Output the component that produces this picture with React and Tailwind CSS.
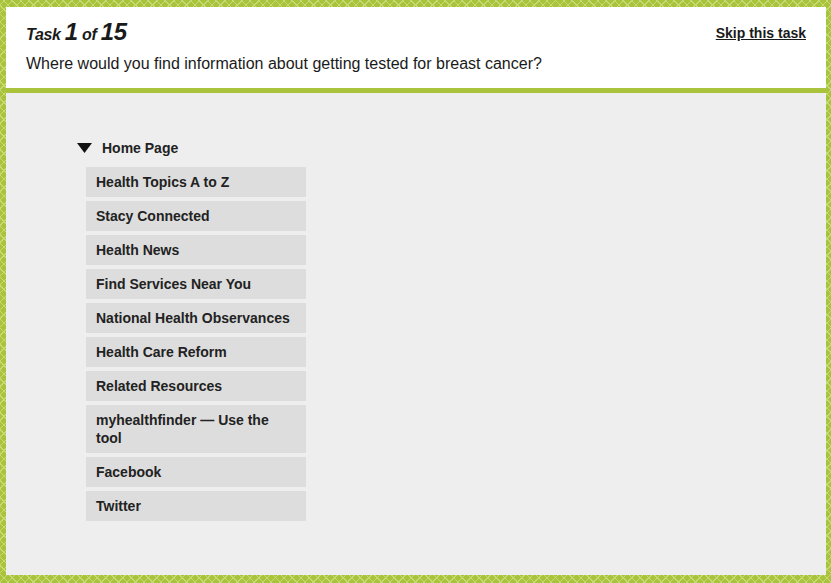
// Tree test task — header + arbre de navigation
const items = [
  'Health Topics A to Z',
  'Stacy Connected',
  'Health News',
  'Find Services Near You',
  'National Health Observances',
  'Health Care Reform',
  'Related Resources',
  'myhealthfinder — Use the tool',
  'Facebook',
  'Twitter',
];

export default function App() {
  return (
    <div
      className="h-[583px] w-[831px] flex flex-col pt-[7px] pl-[6px] pr-[5px] pb-[8px] bg-[#a9c43c] bg-[image:repeating-linear-gradient(45deg,#c6da74_0_1px,transparent_1px_6px),repeating-linear-gradient(-45deg,#c6da74_0_1px,transparent_1px_6px)]"
      style={{ fontFamily: '"Liberation Sans", Arial, sans-serif' }}
    >
      {/* En-tête */}
      <div className="bg-white border-b-[5px] border-[#a9c43c] px-[20px] pt-[12px] h-[86px] text-[#1a1a1a]">
        <div className="flex justify-between items-start">
          <p className="italic font-bold leading-[26px] tracking-[-0.3px]">
            <span className="text-[16px]">Task </span>
            <span className="text-[24px]">1</span>
            <span className="text-[16px]"> of </span>
            <span className="text-[24px]">15</span>
          </p>
          <a href="#" className="mt-[5px] text-[14px] leading-[18px] font-bold underline">
            Skip this task
          </a>
        </div>
        <p className="mt-[6px] text-[16px] leading-[20px]">
          Where would you find information about getting tested for breast cancer?
        </p>
      </div>

      {/* Arbre */}
      <div className="flex-1 bg-[#eeeeee] pt-[46px] pl-[71px] text-[#222]">
        <div className="flex items-center gap-[10px] h-[18px]">
          <svg width="15" height="10" viewBox="0 0 15 10">
            <path d="M0 0h15L7.5 10z" fill="#111" />
          </svg>
          <span className="text-[14px] font-bold leading-[18px]">Home Page</span>
        </div>
        <ul className="mt-[10px] ml-[9px] w-[220px] flex flex-col gap-[4px]">
          {items.map((it) => (
            <li key={it}
              className="bg-[#dddddd] px-[10px] py-[6px] text-[14px] font-bold leading-[18px]">
              {it}
            </li>
          ))}
        </ul>
      </div>
    </div>
  );
}
